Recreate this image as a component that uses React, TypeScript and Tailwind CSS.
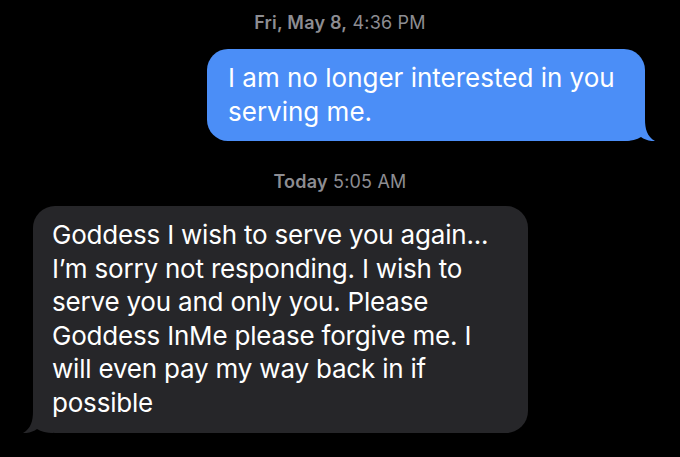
import React from "react";

const font = { fontFamily: "Inter, 'Liberation Sans', sans-serif" };

function Stamp({ day, time }: { day: string; time: string }) {
  return (
    <div className="text-center text-[18px] leading-[22px] tracking-[0.2px] text-[#8d8d92]">
      <span className="font-semibold">{day}</span> {time}
    </div>
  );
}

export default function App() {
  return (
    <div
      className="w-[680px] h-[457px] bg-black overflow-hidden flex flex-col"
      style={font}
    >
      <div className="pt-[12px]">
        <Stamp day="Fri, May 8," time="4:36 PM" />
      </div>

      {/* outgoing */}
      <div className="flex justify-end pr-[35px] mt-[15px]">
        <div className="relative bg-[#4b8ef7] rounded-[21px] w-[438px] pl-[21px] pt-[12px] pb-[12px] text-white text-[26px] leading-[34px] tracking-[0px] whitespace-nowrap">
          I am no longer interested in you
          <br />
          serving me.
          <svg
            className="absolute right-[-10px] bottom-0"
            width="30"
            height="22"
            viewBox="0 0 30 22"
          >
            <path
              d="M0 0 H20 C20 10 22 17.5 30 22 C24.5 22.5 19.5 20.5 16 18 C12 20.5 6 22 0 22 Z"
              fill="#4b8ef7"
            />
          </svg>
        </div>
      </div>

      <div className="mt-[30px]">
        <Stamp day="Today" time="5:05 AM" />
      </div>

      {/* incoming */}
      <div className="flex pl-[33px] mt-[13px]">
        <div className="relative bg-[#262629] rounded-[22px] w-[495px] pl-[19px] pt-[12px] pb-[14px] text-white text-[26px] leading-[33.5px] tracking-[-0.2px] whitespace-nowrap">
          Goddess I wish to serve you again...
          <br />
          I’m sorry not responding. I wish to
          <br />
          serve you and only you. Please
          <br />
          Goddess InMe please forgive me. I
          <br />
          will even pay my way back in if
          <br />
          possible
          <svg
            className="absolute left-[-10px] bottom-0"
            width="30"
            height="22"
            viewBox="0 0 30 22"
          >
            <path
              d="M30 0 H10 C10 10 8 17.5 0 22 C5.5 22.5 10.5 20.5 14 18 C18 20.5 24 22 30 22 Z"
              fill="#262629"
            />
          </svg>
        </div>
      </div>
    </div>
  );
}
